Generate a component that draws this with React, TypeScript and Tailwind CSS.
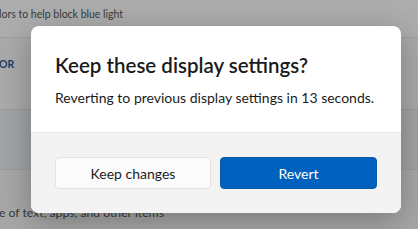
export default function App() {
  return (
    <div className="relative h-[229px] w-[418px] overflow-hidden bg-[#a9a9a9] text-[#333] [font-family:Lato,sans-serif]">
      {/* dimmed settings page behind the dialog */}
      <div className="flex h-[38px] items-center border-b border-[#9d9d9d] bg-[#adadad] pb-[7px] text-[10.5px]">
        <span className="-ml-[1px] text-[#3a3a3a]">lors to help block blue light</span>
      </div>
      <div className="flex h-[72px] items-center border-b border-[#9d9d9d] bg-[#aaaaaa] pb-[18px]">
        <span className="-ml-[1px] text-[10.5px] font-bold text-[#1e3d6b]">OR</span>
      </div>
      <div className="h-[60px] border-b border-[#9b9b9b] bg-[#a2a3a5]" />
      <div className="flex h-[59px] items-end bg-[#a7a7a7] pb-[7px] text-[12.2px]">
        <span className="-ml-[1px] text-[#3a3a3a]">e of text, apps, and other items</span>
      </div>

      {/* dialog */}
      <div className="absolute left-[31px] top-[26px] flex h-[187px] w-[370px] flex-col overflow-hidden rounded-[8px] bg-white shadow-[0_8px_32px_rgba(0,0,0,0.28)]">
        <div className="flex h-[106px] flex-col px-[24px] pt-[26px]">
          <h1 className="text-[20.5px] font-semibold leading-[26px] text-[#1b1b1b]">
            Keep these display settings?
          </h1>
          <p className="mt-[10px] whitespace-nowrap text-[14px] leading-[20px] text-[#1b1b1b]">
            Reverting to previous display settings in 13 seconds.
          </p>
        </div>
        <div className="flex flex-1 gap-[9px] border-t border-[#e5e5e5] bg-[#f3f3f3] px-[24px] pt-[24px]">
          <button className="h-[32px] w-[156px] rounded-[4px] border border-[#e3e3e3] bg-[#fbfbfb] text-[14px] text-[#1b1b1b]">
            Keep changes
          </button>
          <button className="h-[32px] w-[157px] rounded-[4px] border border-[#0a5aa8] bg-[#0062be] text-[14px] text-white">
            Revert
          </button>
        </div>
      </div>
    </div>
  );
}
